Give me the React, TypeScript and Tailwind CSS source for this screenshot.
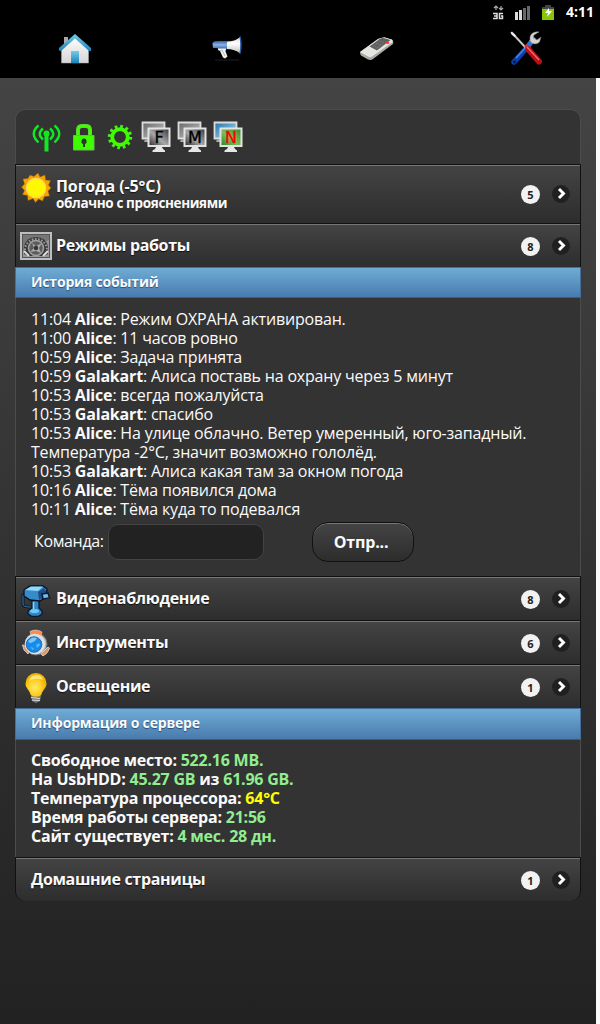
import React from "react";

const FONT = "font-['Open_Sans','Noto_Sans',sans-serif]";

function HomeIcon() {
  return (
    <svg width="32" height="32" viewBox="0 0 32 32">
      <defs>
        <linearGradient id="roof" x1="0" y1="0" x2="0" y2="1"><stop stopColor="#77cbea" /><stop offset="1" stopColor="#1d84b5" /></linearGradient>
        <linearGradient id="wall" x1="0" y1="0" x2="0" y2="1"><stop stopColor="#fff" /><stop offset="1" stopColor="#d5d5d8" /></linearGradient>
      </defs>
      <path d="M5 4h4v10H5z" fill="#aaa" />
      <path d="M2.500 16 16 3.500 29.500 16v14h-27z" fill="url(#wall)" stroke="#aaa" strokeWidth=".5" />
      <path d="M0 17.500V15L16 1l16 14v3h-2L16 5.500 2 18z" fill="url(#roof)" />
      <path d="M12 18h8v12h-8z" fill="url(#roof)" />
    </svg>
  );
}

function MegaphoneIcon() {
  return (
    <svg width="30" height="26" viewBox="0 0 30 26">
      <defs>
        <linearGradient id="horn" x1="0" y1="0" x2="0" y2="1"><stop stopColor="#d6d6d3" /><stop offset=".4" stopColor="#fff" /><stop offset="1" stopColor="#bdbdb9" /></linearGradient>
        <linearGradient id="body" x1="0" y1="0" x2="0" y2="1"><stop stopColor="#2d62ae" /><stop offset=".45" stopColor="#8bb3e4" /><stop offset="1" stopColor="#2a5ca6" /></linearGradient>
      </defs>
      <path d="M14.500 5.500C20 5.500 25 4 28 1v16.500c-3-3-8-4.500-13.500-4.500z" fill="url(#horn)" />
      <path d="M28 .5q2 8.500 0 17" fill="#8ca9cf" stroke="#2b5cab" strokeWidth="1.300" />
      <path d="M2 5.500 6 5h9v8.500H7l-2-1.500H1L.5 7z" fill="url(#body)" />
      <path d="M6 12.500h8l-.5 3 2 5-2.500 2-2-1-3-6.500-2-1z" fill="#f2f2ef" />
      <path d="m8 15 2-1 3 6" stroke="#a9a9a9" strokeWidth=".8" fill="none" />
      <path d="M3 24h24" stroke="#101010" strokeWidth="2" />
    </svg>
  );
}

function RemoteIcon() {
  return (
    <svg width="36" height="24" viewBox="0 0 36 24">
      <path d="M1 15 19 2q4-2 7-1.500l7 2.500q2 1 1 4L14 22q-2 1.500-5 .5l-7-4q-1-1-1-3.500z" fill="#a9a9a6" />
      <path d="M1 15 19 2q4-2 7-1.500l7 2q1.500 1 0 3L13 19.500q-2 1-4 0z" fill="#e6e5e2" />
      <path d="M10.500 9.500 20.500 2q3-1.500 6-.5l5 1.500L18 13.500z" fill="#5f5f5f" />
      <path d="m14 9 7 2M17 6.500l7 2M20 4l7 2M20 3.500 14 9.500M25 5l-8 7" stroke="#858585" strokeWidth=".7" strokeDasharray="1 1" />
      <circle cx="28.500" cy="5.500" r="1.600" fill="#f03a2e" />
    </svg>
  );
}

function ToolsIcon() {
  return (
    <svg width="34" height="36" viewBox="0 0 34 36">
      <path d="m4 31 14.500-16" stroke="#0b3fae" strokeWidth="5.500" strokeLinecap="round" />
      <path d="m6 27 12-13" stroke="#3f83ee" strokeWidth="1.800" />
      <circle cx="4.500" cy="31" r="1.400" fill="#001747" />
      <path d="m18 15 4-5" stroke="#2f73dd" strokeWidth="5" />
      <path d="m21 11 4-4" stroke="#bbb" strokeWidth="4.500" />
      <path d="M29 1c-5-1-9.500 2-9 7 0 5 6 6.500 9.500 3l1.500-5-4 3-4-2 1-3z" fill="#d5d5d5" stroke="#777" strokeWidth=".5" />
      <path d="m3 3 13 14" stroke="#c9c9c9" strokeWidth="1.900" />
      <path d="M.5 1.500 2 .5l4 4-1.500 1.500-3-2.500z" fill="#eee" />
      <path d="M14.500 14.500 17 13l4 3-2 5-4-3z" fill="#dd2e35" />
      <path d="m18.500 18.500 10.500 12" stroke="#b90f17" strokeWidth="6" strokeLinecap="round" />
      <path d="m17 16 12 13" stroke="#f16a66" strokeWidth="1.500" />
    </svg>
  );
}

function AntennaIcon() {
  return (
    <svg width="30" height="30" viewBox="0 0 30 30" fill="none" stroke="#12e822" strokeWidth="2.400">
      <path d="M6.500 2.500q-9.500 8 0 17M11 5.500q-6.500 5.500 0 11M22.500 2.500q9.500 8 0 17M18 5.500q6.500 5.500 0 11" />
      <path d="M14.500 11v17.500" strokeWidth="4" />
      <circle cx="14.500" cy="10.500" r="3" fill="#12e822" stroke="none" />
    </svg>
  );
}

function LockIcon() {
  return (
    <svg width="22" height="27" viewBox="0 0 22 27">
      <path d="M5 13V6q0-4 4-4h4q4 0 4 4v7" fill="none" stroke="#78b35c" strokeWidth="4" />
      <path d="M5 13V6q0-4 4-4h4q4 0 4 4v7" fill="none" stroke="#3eff00" strokeWidth="2.800" />
      <path d="M.5 11.500h20.500v14.500H.5z" fill="#3eff00" stroke="#78b35c" />
      <path d="M8.500 17q0-2.500 2.500-2.500t2.500 2.500v2l-1.500 1v3h-2v-3l-1.500-1z" fill="#28352a" />
    </svg>
  );
}

function GearIcon() {
  return (
    <svg width="26" height="26" viewBox="0 0 26 26" fill="none">
      <circle cx="13" cy="13" r="10.700" stroke="#58a541" strokeWidth="3.200" strokeDasharray="2.700 2.902" />
      <circle cx="13" cy="13" r="7.800" stroke="#3eff00" strokeWidth="3.800" />
      <circle cx="13" cy="13" r="10.500" stroke="#3eff00" strokeWidth="2.600" strokeDasharray="2.300 3.198" />
    </svg>
  );
}

function MonitorIcon({ letter, color }: { letter: string; color?: boolean }) {
  const id = color ? "c" : "g";
  return (
    <svg width="30" height="32" viewBox="0 0 30 32">
      <defs>
        <linearGradient id={"b" + id} x1="0" x2="1" y1="0" y2="1"><stop stopColor={color ? "#246fa9" : "#666"} /><stop offset="1" stopColor={color ? "#b2e4fb" : "#ccc"} /></linearGradient>
        <linearGradient id={"f" + id} x1="0" x2="1" y1="1" y2="0"><stop stopColor={color ? "#218325" : "#242424"} /><stop offset=".45" stopColor={color ? "#78bf58" : "#a8a8a8"} /><stop offset="1" stopColor={color ? "#3b8527" : "#333"} /></linearGradient>
      </defs>
      <path d="M1.500 1.500h22v16h-22z" fill={"url(#b" + id + ")"} stroke="#ddd" strokeWidth="1.800" />
      <path d="M4 18.500h4v2.500H3z" fill="#aaa" />
      <path d="M7.500 7.500h21v17.500h-21z" fill={"url(#f" + id + ")"} stroke="#e3e3e3" strokeWidth="2" />
      <path d="M15 26h6l1 2 2 1.500v1.500H11.500v-1.500l2.500-1.500z" fill="#e7e7e7" />
      <text x="18" y="22" textAnchor="middle" strokeWidth=".4" stroke={color ? "#f00" : "#000"} className="font-['DejaVu_Sans',sans-serif] text-[16px]" fill={color ? "#f00" : "#000"}>{letter}</text>
    </svg>
  );
}

function SunIcon() {
  return (
    <svg width="30" height="30" viewBox="0 0 30 30">
      <path d="m17 0 2 4 5-2 .5 5 5 .5-2 4.500 2.500 3-3 3 1.500 5-5 .5-2 4.500-4-2-3 3.500-2.500-4-5 2-.5-5-5-1 2-4-3-3.500 3-3L2 6l5-.5L9 2l4 1.500z" fill="#f4a500" stroke="#a45e05" strokeWidth=".4" />
      <circle cx="15" cy="15" r="10.300" fill="#ffd86a" />
      <circle cx="15" cy="15" r="9" fill="#fff800" />
    </svg>
  );
}

function ModesIcon() {
  return (
    <svg width="32" height="28" viewBox="0 0 32 28">
      <path d="M1 1h30v26H1z" fill="#555" stroke="#bebebe" strokeWidth="2" />
      <path d="M3 3h26v22H3z" fill="#989898" />
      <path d="M3 3h26v5L3 19z" fill="#777" />
      <path d="M4 22V15q2-10 12-10t12 10v7l-4 2H8z" fill="#3a3a3a" />
      <path d="M5 18a11 11 0 0 1 22 0" fill="none" stroke="#999" strokeWidth="2" strokeDasharray="1.700 1.500" />
      <circle cx="16" cy="16" r="7.500" fill="#5d5d5d" stroke="#a2a2a2" strokeWidth="1.500" />
      <path d="m10 20 4-4-2-5 4 3 6-3-3 5 2 5-5-2z" fill="#aaa" />
      <circle cx="16" cy="16" r="2.200" fill="#333" />
      <path d="m4 19 5 5M28 19l-5 5" stroke="#ddd" strokeWidth="2" />
    </svg>
  );
}

function CameraIcon() {
  return (
    <svg width="30" height="32" viewBox="0 0 30 32">
      <path d="M5 8 2 10v9q0 3 7 3" stroke="#091626" strokeWidth="3" fill="none" />
      <path d="M5 8 2 10v9q0 3 7 3" stroke="#377db5" strokeWidth="1" fill="none" />
      <path d="M11 15h7v8l3 3v3l-4 2.500h-6L7 29v-3l4-3z" fill="#3186c7" stroke="#08182c" strokeWidth="1.300" />
      <path d="M3 5 9 1h13l4 3-1 8-6 4-10-1-6-4z" fill="#398bc8" stroke="#061324" strokeWidth="1.300" />
      <path d="m4 5 6-3.500h12L17 6z" fill="#91d9fa" />
      <path d="m17 7 6-4 2 3v5l-7 4z" fill="#1d4d89" />
      <path d="m21 9 6-1 1.500 5-6.500 1z" fill="#75b9e9" stroke="#0b1a33" strokeWidth="1.500" />
      <path d="M12.500 17v7" stroke="#8bd4fa" strokeWidth="1.500" />
      <ellipse cx="13.500" cy="26" rx="4.500" ry="2" fill="#72c7f1" />
    </svg>
  );
}

function GlobeIcon() {
  return (
    <svg width="28" height="29" viewBox="0 0 28 29">
      <circle cx="14" cy="15" r="11" fill="#b3b5b7" stroke="#6d7073" />
      <path d="M8 2.500q6-3 12 .5l-1 4-10-1z" fill="#ff8a45" stroke="#ccc" strokeWidth=".7" />
      <path d="M1.500 16H.5l1.500 5 4 4 2-4zM19 25l4-4 3-3 1.500 1q-1 5-6.500 8z" fill="#dc9565" stroke="#ddd" strokeWidth=".8" />
      <circle cx="13" cy="15" r="10.300" fill="#dddfe0" />
      <circle cx="12" cy="15.500" r="7.800" fill="#168bea" stroke="#165a9d" strokeWidth=".8" />
      <path d="M6 13q3-6 9-4l-2 3-4 2z" fill="#7bc5fb" />
      <path d="m14 16 3-2 1 2-3 3zM8 18l4 1-1 2" fill="#54bafb" />
    </svg>
  );
}

function BulbIcon() {
  return (
    <svg width="22" height="32" viewBox="0 0 22 32">
      <defs><radialGradient id="bulb" cx=".45" cy=".6"><stop stopColor="#ffe770" /><stop offset=".55" stopColor="#ffd52b" /><stop offset="1" stopColor="#f5b400" /></radialGradient></defs>
      <path d="M6 23h10l-1 5-4 2-4-2z" fill="#777" />
      <path d="m6 24.500 9 1m-8 1.500 8 .5" stroke="#ddd" strokeWidth="1.200" />
      <path d="M.5 10.500a10.500 10.500 0 0 1 21 0c0 5-4 6-5 11-1 3-10 3-11 0-1-5-5-6-5-11z" fill="url(#bulb)" />
      <path d="M4 8q2-7 9-6 4 1 5 5-7-3-14 1z" fill="#fff0a0" opacity=".75" />
    </svg>
  );
}

function StatusBar() {
  return (
    <div className="flex h-[26px] items-start justify-end">
      <svg className="mt-[5px]" width="11" height="15" viewBox="0 0 11 15" fill="none" stroke="#aaa">
        <path d="M3 1v4M1 3l2-2 2 2M8 1v4M6 3l2 2 2-2" strokeWidth="1.200" />
        <path d="M0 8.500h4v5H0M1 11h3M10 8.500H6.500v5h3V11H8" stroke="#ddd" strokeWidth="1.500" />
      </svg>
      <svg className="ml-[10px] mt-[6px]" width="17" height="14" viewBox="0 0 17 14">
        <path d="M1 6h3v8H1zM5 4h3v10H5z" fill="#ddd" />
        <path d="M9 2h3v12H9zM13 0h3v14h-3z" fill="#686868" />
      </svg>
      <svg className="ml-[10px] mt-[4px]" width="14" height="17" viewBox="0 0 14 17">
        <path d="M4 1h6v2h3v13H1V3h3z" fill="#444" />
        <path d="M1 5h12v11H1z" fill="#89c40b" />
        <path d="m8 4-4 5h3l-1 4 5-6H8z" fill="#fff" />
      </svg>
      <span className="ml-[11px] mr-[6px] mt-[2px] text-[14px] font-bold leading-5 text-white">4:11</span>
    </div>
  );
}

function Row({ icon, title, sub, count, last }: { icon?: React.ReactNode; title: string; sub?: string; count: number; last?: boolean }) {
  return (
    <div className={`flex w-full border border-b-0 border-[#111] bg-linear-to-b from-[#444] to-[#2d2d2d] shadow-[inset_0_1px_0_#777] ${sub ? "h-[59px]" : "h-[44px]"} ${last ? "rounded-b-[10px] border-b" : ""}`}>
      {icon && <div className="flex w-[40px] shrink-0 justify-center pt-[8px]">{icon}</div>}
      <div className={`grow ${icon ? "" : "pl-[15px]"} pt-[11px]`}>
        <div className={`whitespace-nowrap text-[16px] font-bold leading-[20px] [text-shadow:0_1px_1px_#111] ${sub ? "tracking-[-0.1px]" : "tracking-[-0.34px]"}`}>{title}</div>
        {sub && <div className="-mt-px whitespace-nowrap text-[13.5px] font-bold leading-[16px] tracking-[-0.36px]">{sub}</div>}
      </div>
      <div className={`flex shrink-0 items-start pr-[10px] ${sub ? "pt-[20px]" : "pt-[13px]"}`}>
        <span className="mr-[12px] flex h-[19px] w-[19px] items-center justify-center rounded-full bg-[#f2f2f2] text-[11px] font-bold leading-none text-[#222]">{count}</span>
        <svg width="18" height="18" viewBox="0 0 18 18"><circle cx="9" cy="9" r="9" fill="#202020" /><path d="m7 4 4.500 4.500L7 13" fill="none" stroke="#fff" strokeWidth="2.900" /></svg>
      </div>
    </div>
  );
}

function Divider({ children, tall }: { children: string; tall?: boolean }) {
  return (
    <div className={`flex items-center border border-[#456f9a] border-b-[#555] bg-linear-to-b from-[#6facd5] to-[#497bae] px-[15px] text-[14px] font-bold tracking-[-0.18px] [text-shadow:0_1px_1px_#254f7a] ${tall ? "h-[32px]" : "h-[31px]"}`}>
      <span className={tall ? "-mt-[3px]" : "-mt-[2px]"}>{children}</span>
    </div>
  );
}

const messages = [
  ["11:04", "Alice", "Режим ОХРАНА активирован."],
  ["11:00", "Alice", "11 часов ровно"],
  ["10:59", "Alice", "Задача принята"],
  ["10:59", "Galakart", "Алиса поставь на охрану через 5 минут"],
  ["10:53", "Alice", "всегда пожалуйста"],
  ["10:53", "Galakart", "спасибо"],
  ["10:53", "Alice", "На улице облачно. Ветер умеренный, юго-западный. Температура -2°C, значит возможно гололёд."],
  ["10:53", "Galakart", "Алиса какая там за окном погода"],
  ["10:16", "Alice", "Тёма появился дома"],
  ["10:11", "Alice", "Тёма куда то подевался"],
];

export default function App() {
  return (
    <div className={`h-[1024px] w-[600px] overflow-hidden bg-[#fafafa] text-[#fafafa] ${FONT}`}>
      <header className="h-[78px] bg-black">
        <StatusBar />
        <nav className="grid h-[52px] grid-cols-4">
          <div className="flex justify-center pt-[7px]"><HomeIcon /></div>
          <div className="flex justify-center pl-[3px] pt-[10px]"><MegaphoneIcon /></div>
          <div className="flex justify-center pl-[4px] pt-[11px]"><RemoteIcon /></div>
          <div className="flex justify-center pl-[4px] pt-[5px]"><ToolsIcon /></div>
        </nav>
      </header>
      <main className="h-[946px] w-[596px] bg-linear-to-b from-[#444] to-[#222] pl-[15px] pt-[31px]">
        <div className="w-[566px]">
          <div className="flex h-[55px] rounded-t-[10px] border border-b-0 border-[#4c4c4c] bg-[#333]">
            <div className="w-[39px] shrink-0 pl-[16px] pt-[13px]"><AntennaIcon /></div>
            <div className="ml-[18px] mt-[14px] w-[22px] shrink-0"><LockIcon /></div>
            <div className="ml-[12px] mt-[14px] w-[26px] shrink-0"><GearIcon /></div>
            <div className="ml-[8px] mt-[11px] flex gap-[6px]">
              <MonitorIcon letter="F" /><MonitorIcon letter="M" /><MonitorIcon letter="N" color />
            </div>
          </div>
          <Row icon={<SunIcon />} title="Погода (-5°C)" sub="облачно с прояснениями" count={5} />
          <Row icon={<ModesIcon />} title="Режимы работы" count={8} />
          <Divider>История событий</Divider>
          <section className="h-[278px] border-x border-[#4c4c4c] bg-[#333] px-[15px] pt-[12px] text-[16px] leading-[19px] tracking-[-0.19px]">
            {messages.map(([time, who, text]) => (
              <p key={time + text}>{time} <b>{who}</b>: {text}</p>
            ))}
            <div className="flex pt-[3px]">
              <label className="w-[77px] pl-[3px] pt-[10px] tracking-[-0.35px]">Команда:</label>
              <input className="mt-[2px] h-[36px] w-[156px] rounded-[10px] border border-[#444] bg-[#222]" />
              <button className="ml-[48px] h-[40px] w-[102px] rounded-[16px] border border-[#111] bg-linear-to-b from-[#444] to-[#2d2d2d] pr-[4px] font-bold shadow-[inset_0_1px_0_#777]">Отпр...</button>
            </div>
          </section>
          <Row icon={<CameraIcon />} title="Видеонаблюдение" count={8} />
          <Row icon={<GlobeIcon />} title="Инструменты" count={6} />
          <Row icon={<BulbIcon />} title="Освещение" count={1} />
          <Divider tall>Информация о сервере</Divider>
          <section className="h-[117px] border-x border-[#4c4c4c] bg-[#333] px-[15px] pt-[11px] text-[16px] font-bold leading-[19px] tracking-[-0.22px]">
            <p>Свободное место: <span className="text-[#90ee90]">522.16 MB.</span></p>
            <p>На UsbHDD: <span className="text-[#90ee90]">45.27 GB</span> из <span className="text-[#90ee90]">61.96 GB.</span></p>
            <p>Температура процессора: <span className="text-[#ff0]">64°C</span></p>
            <p>Время работы сервера: <span className="text-[#90ee90]">21:56</span></p>
            <p>Сайт существует: <span className="text-[#90ee90]">4 мес. 28 дн.</span></p>
          </section>
          <Row title="Домашние страницы" count={1} last />
        </div>
      </main>
    </div>
  );
}
